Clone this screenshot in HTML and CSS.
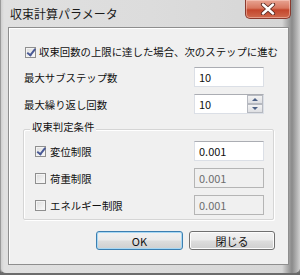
FILE: index.html
```html
<!DOCTYPE html>
<html lang="ja">
<head>
<meta charset="utf-8">
<link rel="stylesheet" href="styles.css">
</head>
<body>
<div class="window">
  <div class="titlebar">
    <span class="title">収束計算パラメータ</span>
    <span class="close">
      <svg width="16" height="12" viewBox="0 0 16 12">
        <path d="M3 1.5 L13 10.5 M13 1.5 L3 10.5" stroke="#5a2a22" stroke-width="4.2" stroke-linecap="round"/>
        <path d="M3 1.5 L13 10.5 M13 1.5 L3 10.5" stroke="#ffffff" stroke-width="2.4" stroke-linecap="round"/>
      </svg>
    </span>
  </div>
  <div class="client">
    <div class="check-row"><span class="cb checked"></span><span>収束回数の上限に達した場合、次のステップに進む</span></div>
    <div class="field-row first"><span>最大サブステップ数</span><span class="input">10</span></div>
    <div class="field-row"><span>最大繰り返し回数</span><span class="input spin"><span class="val">10</span><span class="spinner"><span class="up"></span><span class="down"></span></span></span></div>
    <div class="group">
      <div class="legend">収束判定条件</div>
      <div class="group-row first"><span class="check"><span class="cb checked"></span><span>変位制限</span></span><span class="input">0.001</span></div>
      <div class="group-row"><span class="check"><span class="cb"></span><span>荷重制限</span></span><span class="input disabled">0.001</span></div>
      <div class="group-row"><span class="check"><span class="cb"></span><span>エネルギー制限</span></span><span class="input disabled">0.001</span></div>
    </div>
    <div class="buttons">
      <span class="btn default">OK</span>
      <span class="btn">閉じる</span>
    </div>
  </div>
</div>
</body>
</html>
```

FILE: styles.css
```css
* { box-sizing: border-box; }
html, body { margin: 0; padding: 0; }
body {
  width: 300px;
  height: 275px;
  overflow: hidden;
  font-family: "Noto Sans CJK JP", "Noto Sans", sans-serif;
  font-size: 10.4px;
  color: #111;
  background: #6a6a6a;
}
.window {
  width: 300px;
  height: 275px;
  display: flex;
  flex-direction: column;
  background: linear-gradient(to right, #cfcfcf 0px, #e0e0e0 3px, #dcdcdc 50%, #d6d6d6 94%, #8a8a8a 97.3%, #b5b5b5 99%, #d0d0d0 100%);
  border-left: 1px solid #9a9a9a;
  border-bottom: 2px solid #6c6c6c;
  border-bottom-left-radius: 6px;
  border-bottom-right-radius: 6px;
}
.titlebar {
  height: 27px;
  flex: none;
  display: flex;
  justify-content: space-between;
  align-items: flex-start;
  padding-left: 9px;
  padding-right: 9px;
}
.title {
  font-size: 12px;
  line-height: 14px;
  margin-top: 7px;
  color: #1a1a1a;
}
.close {
  width: 46px;
  height: 19px;
  display: flex;
  align-items: center;
  justify-content: center;
  border: 1px solid #8a3a2e;
  border-top: none;
  border-radius: 0 0 5px 5px;
  background: linear-gradient(#e8a493 0%, #d8775f 45%, #c4462c 55%, #cf6a4e 100%);
  box-shadow: inset 0 0 0 1px rgba(255,220,210,0.45);
}
.close svg { display: block; }
.client {
  flex: 1;
  margin: 0 11px 8px 7px;
  background: #f0f0f0;
  border: 1px solid #8e8e8e;
  box-shadow: inset 1px 1px 0 #ffffff;
  display: flex;
  flex-direction: column;
}
.cb {
  width: 11px;
  height: 11px;
  flex: none;
  border: 1px solid #8f8f8f;
  background: linear-gradient(135deg, #dcdcdc, #fbfbfb);
  box-shadow: inset 0 0 0 1px #f4f4f4;
  position: relative;
}
.cb.checked::after {
  content: "";
  position: absolute;
  left: 2.5px;
  top: -0.5px;
  width: 3px;
  height: 6.5px;
  border: solid #4a5a96;
  border-width: 0 2px 2px 0;
  transform: rotate(38deg);
}
.check-row {
  display: flex;
  align-items: center;
  gap: 3px;
  height: 14px;
  margin: 17px 0 0 16px;
  line-height: 14px;
}
.field-row {
  display: flex;
  justify-content: space-between;
  align-items: center;
  height: 20px;
  margin-top: 7px;
  padding: 0 24px 0 15px;
}
.field-row.first { margin-top: 8px; }
.input {
  width: 70px;
  height: 20px;
  display: flex;
  align-items: center;
  padding-left: 4px;
  background: #ffffff;
  border: 1px solid #dbdfe6;
  border-top-color: #abadb3;
  font-size: 11px;
  color: #111;
}
.input.disabled {
  background: #f0f0f0;
  border-color: #b5b5b5;
  color: #6d6d6d;
}
.input.spin { padding-right: 0; justify-content: space-between; }
.spinner {
  width: 16px;
  height: 18px;
  display: flex;
  flex-direction: column;
}
.spinner span {
  flex: 1;
  border: 1px solid #b6b9c0;
  background: linear-gradient(#f3f3f3, #dedfe3);
  display: flex;
  align-items: center;
  justify-content: center;
}
.spinner .up::before {
  content: "";
  border-left: 3px solid transparent;
  border-right: 3px solid transparent;
  border-bottom: 3px solid #4d6185;
}
.spinner .down::before {
  content: "";
  border-left: 3px solid transparent;
  border-right: 3px solid transparent;
  border-top: 3px solid #4d6185;
}
.group {
  margin: 15px 14px 0 14px;
  border: 1px solid #d5d5d5;
  box-shadow: inset 1px 1px 0 #fff, 1px 1px 0 #fff;
  border-radius: 2px;
  padding: 0 9px 4px 11px;
}
.legend {
  margin: -9px 0 0 -5px;
  width: fit-content;
  background: #f0f0f0;
  padding: 0 2px;
  line-height: 12px;
}
.group-row {
  display: flex;
  justify-content: space-between;
  align-items: center;
  height: 20px;
  margin-top: 7px;
}
.group-row.first { margin-top: 8px; }
.check {
  display: flex;
  align-items: center;
  gap: 4px;
}
.buttons {
  display: flex;
  justify-content: flex-end;
  gap: 6px;
  margin-top: 11px;
  padding-right: 13px;
}
.btn {
  width: 86px;
  height: 19px;
  display: flex;
  align-items: center;
  justify-content: center;
  border: 1px solid #707070;
  border-radius: 3px;
  background: linear-gradient(#f2f2f2 0%, #ebebeb 48%, #dddddd 52%, #cfcfcf 100%);
  box-shadow: inset 0 0 0 1px #fcfcfc;
  font-size: 11px;
  color: #111;
}
.btn.default {
  width: 87px;
  border-color: #3c7fb1;
  box-shadow: inset 0 0 0 1px #a8d8f4;
}
```
